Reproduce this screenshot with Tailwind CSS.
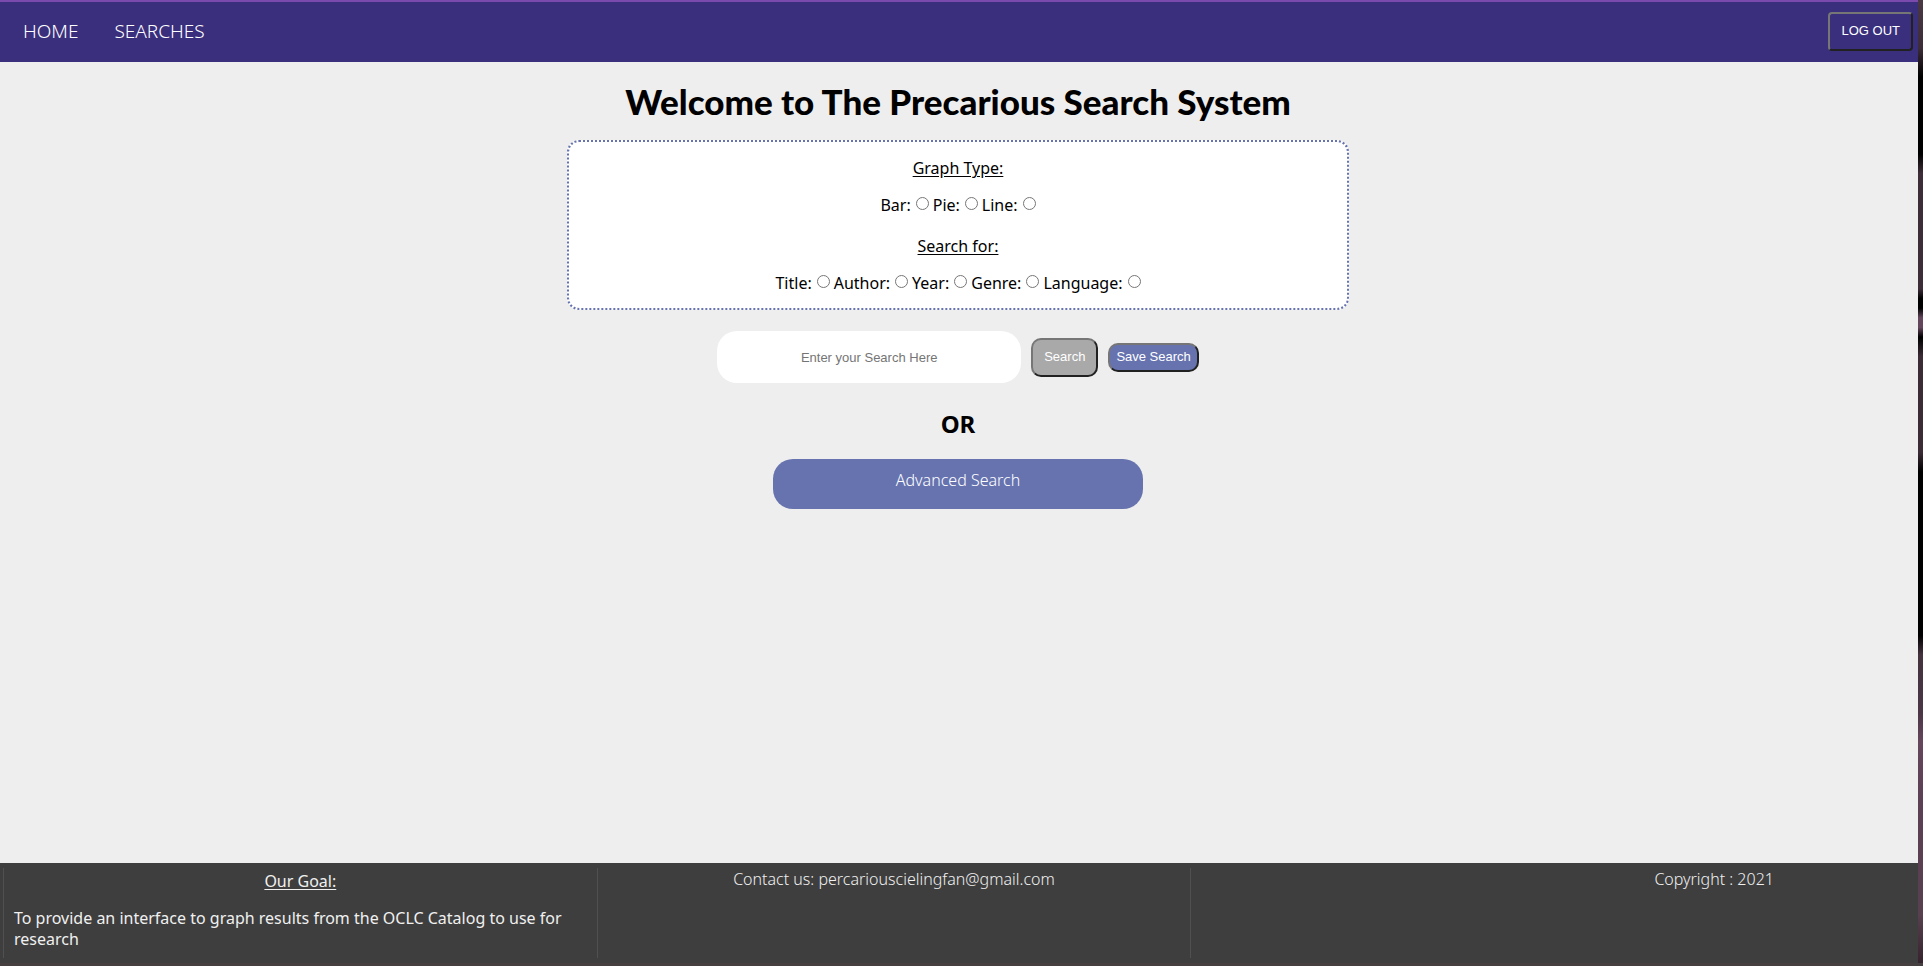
<!DOCTYPE html>
<html lang="en">
<head>
<meta charset="utf-8">
<title>Precarious Search System</title>
<script src="https://cdn.jsdelivr.net/npm/@tailwindcss/browser@4"></script>
</head>
<body class="flex min-h-screen flex-col border-b-3 border-[#45403f] bg-[#3e3e3e] font-['Noto_Sans',sans-serif] text-base text-black">
<div class="flex grow">
  <div class="flex grow flex-col bg-[#eeeeee]">
    <nav class="flex h-[62px] items-center justify-between border-t-2 border-[#7a4bac] bg-[#3a2f7c] pr-[5px] pb-0.5 pl-[23px] text-[19px] font-light text-white">
      <div class="flex gap-9">
        <a href="#">HOME</a>
        <a href="#">SEARCHES</a>
      </div>
      <button class="h-[39px] rounded border-2 border-t-[#767676] border-r-[#212121] border-b-[#212121] border-l-[#767676] px-[11px] font-['Liberation_Sans',sans-serif] text-[13px] font-normal">LOG OUT</button>
    </nav>

    <main class="flex grow flex-col items-center pr-0.5">
      <h1 class="mt-[19px] font-['Lato',sans-serif] text-[35px] leading-[40px] font-black">Welcome to The Precarious Search System</h1>

      <form class="mt-[19px] flex w-[782px] max-w-full flex-col items-center rounded-xl border-2 border-dotted border-[#6673af] bg-white pt-[15px] pb-[14px] leading-[22px]">
        <p class="underline underline-offset-2">Graph Type:</p>
        <div class="mt-[15px] flex gap-1">
          <label class="flex gap-[5px]">Bar: <input type="radio" name="graph" class="mt-[3px] size-[13px]"></label>
          <label class="flex gap-[5px]">Pie: <input type="radio" name="graph" class="mt-[3px] size-[13px]"></label>
          <label class="flex gap-[5px]">Line: <input type="radio" name="graph" class="mt-[3px] size-[13px]"></label>
        </div>
        <p class="mt-[19px] underline underline-offset-2">Search for:</p>
        <div class="mt-[15px] flex gap-1">
          <label class="flex gap-[5px]">Title: <input type="radio" name="field" class="mt-[3px] size-[13px]"></label>
          <label class="flex gap-[5px]">Author: <input type="radio" name="field" class="mt-[3px] size-[13px]"></label>
          <label class="flex gap-[5px]">Year: <input type="radio" name="field" class="mt-[3px] size-[13px]"></label>
          <label class="flex gap-[5px]">Genre: <input type="radio" name="field" class="mt-[3px] size-[13px]"></label>
          <label class="flex gap-[5px]">Language: <input type="radio" name="field" class="mt-[3px] size-[13px]"></label>
        </div>
      </form>

      <form class="mt-[21px] flex items-center gap-2.5 font-['Liberation_Sans',sans-serif] text-[13px]">
        <input type="text" aria-label="Search" placeholder="Enter your Search Here" class="h-[52px] w-[304px] rounded-[20px] bg-white text-center placeholder:text-[#757575]">
        <button type="button" class="h-[39px] rounded-[10px] border-2 border-t-[#767676] border-r-[#212121] border-b-[#212121] border-l-[#767676] bg-[#a9a9a9] px-[11px] text-white">Search</button>
        <button type="button" class="h-[29px] rounded-[10px] border-2 border-t-[#767676] border-r-[#212121] border-b-[#212121] border-l-[#767676] bg-[#6673af] px-[6px] text-white">Save Search</button>
      </form>

      <h2 class="mt-[25px] text-2xl font-bold">OR</h2>
      <a href="#" class="mt-[19px] h-[50px] w-[370px] max-w-full rounded-[20px] bg-[#6673af] pt-2.5 text-center leading-[22px] font-light text-white">Advanced Search</a>
    </main>

    <footer class="flex h-[100px] bg-[#3e3e3e] pt-[5px] pl-[3px] leading-[21px] text-[#f0f0f0]">
      <div class="h-[90px] w-[31%] border-l border-[#505050] px-2.5 pt-[3px]">
        <p class="text-center underline underline-offset-2">Our Goal:</p>
        <p class="mt-4">To provide an interface to graph results from the OCLC Catalog to use for research</p>
      </div>
      <p class="h-[90px] w-[31%] border-l border-[#505050] px-2.5 pt-px text-center font-light">Contact us: percariouscielingfan@gmail.com</p>
      <p class="h-[90px] w-[31%] border-l border-[#505050] px-2.5 pt-px text-right font-light">Copyright : 2021</p>
    </footer>
  </div>
  <div class="w-[5px] shrink-0 bg-[linear-gradient(#4a3945_0%,#3d2d38_5%,#000_8%,#000_16%,#3d2d38_18%,#3d2d38_30%,#000_31%,#000_32%,#63465c_33%,#63465c_34%,#000_35%,#3a2b35_37%,#3a2b35_47%,#000_49%,#000_66%,#44323f_68%,#4a3645_74%,#65465c_77%,#5c4054_83%,#58404f_95%,#35232e_100%)]"></div>
</div>
</body>
</html>
